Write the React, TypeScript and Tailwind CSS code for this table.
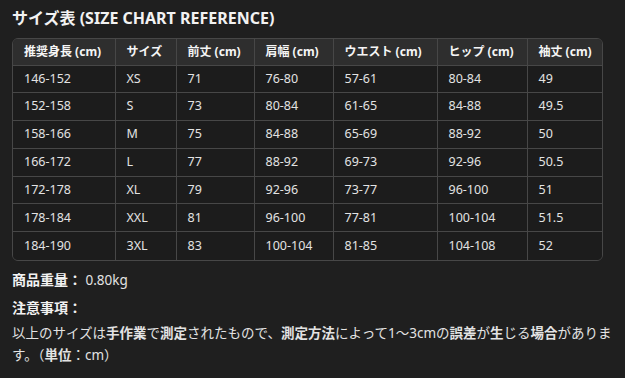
import React from "react";

const rows = [
  ["146-152", "XS", "71", "76-80", "57-61", "80-84", "49"],
  ["152-158", "S", "73", "80-84", "61-65", "84-88", "49.5"],
  ["158-166", "M", "75", "84-88", "65-69", "88-92", "50"],
  ["166-172", "L", "77", "88-92", "69-73", "92-96", "50.5"],
  ["172-178", "XL", "79", "92-96", "73-77", "96-100", "51"],
  ["178-184", "XXL", "81", "96-100", "77-81", "100-104", "51.5"],
  ["184-190", "3XL", "83", "100-104", "81-85", "104-108", "52"],
];

const headers = ["推奨身長 (cm)", "サイズ", "前丈 (cm)", "肩幅 (cm)", "ウエスト (cm)", "ヒップ (cm)", "袖丈 (cm)"];
const widths = [102, 61, 78, 79, 104, 90, 77];

export default function App() {
  return (
    <div
      className="min-h-[378px] w-[625px] bg-[#1f1f1f] px-3 pt-[7px] text-[#e3e3e3]"
      style={{ fontFamily: '"Noto Sans", "Noto Sans CJK JP", sans-serif' }}
    >
      <h1 className="text-[16px] leading-[22px] font-bold text-[#f2f2f2]">サイズ表 (SIZE CHART REFERENCE)</h1>

      <div className="mt-[9px] w-[591px] overflow-hidden rounded-md border border-[#474747]">
        <table className="w-full table-fixed border-collapse text-[12px]">
          <colgroup>
            {widths.map((w, i) => (
              <col key={i} style={{ width: w }} />
            ))}
          </colgroup>
          <thead>
            <tr className="h-[26px] bg-[#2e2e2e]">
              {headers.map((h, i) => (
                <th
                  key={h}
                  className={`whitespace-nowrap border-b border-[#474747] px-[11px] text-left font-bold text-[#f5f5f5] ${i > 0 ? "border-l" : ""}`}
                >
                  {h}
                </th>
              ))}
            </tr>
          </thead>
          <tbody className="bg-[#1c1c1c]">
            {rows.map((r, ri) => (
              <tr key={ri} className="h-[27.8px]">
                {r.map((c, i) => (
                  <td
                    key={i}
                    className={`whitespace-nowrap border-[#474747] px-[11px] text-[12.5px] ${i > 0 ? "border-l" : ""} ${ri < rows.length - 1 ? "border-b" : ""}`}
                  >
                    {c}
                  </td>
                ))}
              </tr>
            ))}
          </tbody>
        </table>
      </div>

      <p className="mt-[8px] text-[13.5px] leading-[22px]">
        <span className="text-[14px] font-bold text-[#f2f2f2]">商品重量：</span> 0.80kg
      </p>

      <p className="mt-[6px] text-[14px] leading-[22px] font-bold text-[#f2f2f2]">注意事項：</p>
      <p className="mt-[3px] text-[13.5px] leading-[22px]">
        以上のサイズは<span className="font-semibold">手作業</span>で<span className="font-semibold">測定</span>されたもので、
        <span className="font-semibold">測定方法</span>によって1〜3cmの<span className="font-semibold">誤差</span>が
        <span className="font-semibold">生</span>じる<span className="font-semibold">場合</span>があります。（
        <span className="font-semibold">単位</span>：cm）
      </p>
    </div>
  );
}
